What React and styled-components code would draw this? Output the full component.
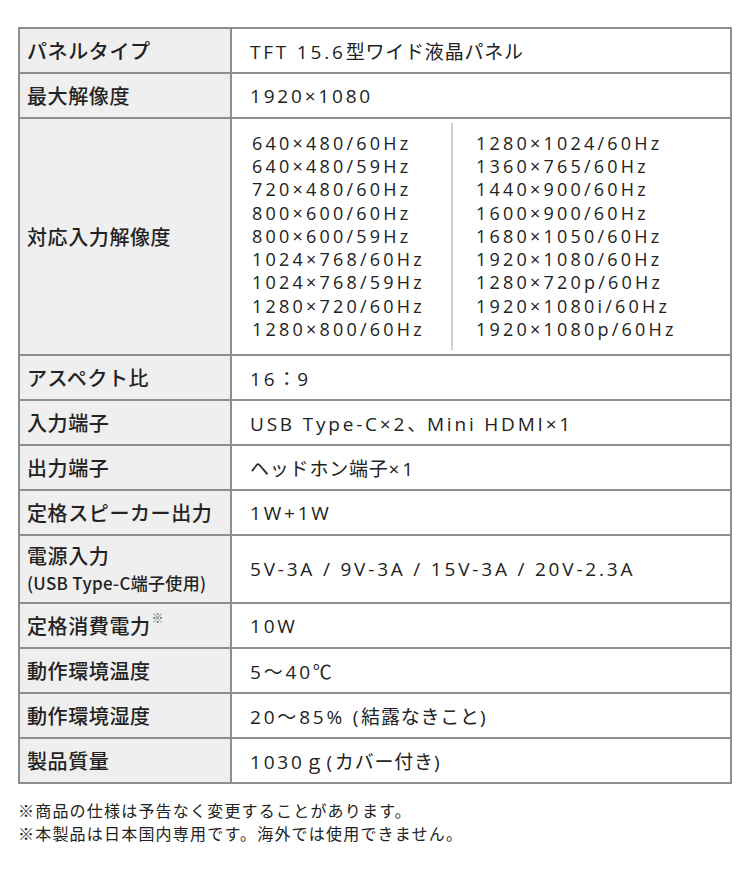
import React from 'react';
import styled, { createGlobalStyle } from 'styled-components';

const GlobalStyle = createGlobalStyle`
  html, body {
    margin: 0;
    padding: 0;
    background: #ffffff;
  }
  body {
    font-family: "Noto Sans CJK JP", sans-serif;
    color: #222222;
  }
`;

const Page = styled.div`
  width: 750px;
  height: 880px;
  box-sizing: border-box;
  padding: 27px 18px 0 18px;
`;

const SpecTable = styled.table`
  width: 714px;
  border-collapse: collapse;
  border: 2px solid #8e8e8e;
`;

const Label = styled.th`
  width: 203px;
  height: ${p => p.$h || 43}px;
  padding: 0 0 0 7px;
  background: #efefef;
  border: 2px solid #8e8e8e;
  text-align: left;
  vertical-align: middle;
  font-family: "Noto Sans CJK JP", sans-serif;
  font-weight: 500;
  font-size: 20px;
  letter-spacing: 0.6px;
  line-height: 1.3;
  color: #222222;
`;

const Sub = styled.span`
  display: block;
  font-size: 17px;
  letter-spacing: 0.3px;
  line-height: 1.3;
  margin-top: 3px;
`;

const Mark = styled.sup`
  font-size: 12px;
  font-weight: 400;
  color: #555555;
  vertical-align: top;
  position: relative;
  top: -3px;
  margin-left: 1px;
`;

const Value = styled.td`
  padding: 0 0 0 18px;
  border: 2px solid #8e8e8e;
  vertical-align: middle;
  font-family: "Open Sans", "Noto Sans CJK JP", sans-serif;
  font-size: 19px;
  letter-spacing: 0.8px;
  color: #222222;
  white-space: nowrap;
`;

/* latin runs are set wider than the kana/kanji around them */
const L = styled.span`
  letter-spacing: 2.8px;
`;

const ResGrid = styled.div`
  display: flex;
  padding: 3px 0;
`;

const ResCol = styled.div`
  display: flex;
  flex-direction: column;
  width: ${p => (p.$right ? 'auto' : '201px')};
  padding: 9px 0 9px ${p => (p.$right ? '23px' : '2px')};
  border-left: ${p => (p.$right ? '2px solid #cfcfcf' : 'none')};
  box-sizing: border-box;
`;

const ResLine = styled.span`
  font-size: 18px;
  line-height: 23.3px;
  letter-spacing: 3.2px;
`;

const Notes = styled.div`
  margin-top: 15px;
  font-family: "Noto Sans CJK JP", sans-serif;
  font-size: 16px;
  line-height: 23px;
  letter-spacing: 1.2px;
  color: #222222;
`;

const leftRes = [
  '640×480/60Hz',
  '640×480/59Hz',
  '720×480/60Hz',
  '800×600/60Hz',
  '800×600/59Hz',
  '1024×768/60Hz',
  '1024×768/59Hz',
  '1280×720/60Hz',
  '1280×800/60Hz',
];

const rightRes = [
  '1280×1024/60Hz',
  '1360×765/60Hz',
  '1440×900/60Hz',
  '1600×900/60Hz',
  '1680×1050/60Hz',
  '1920×1080/60Hz',
  '1280×720p/60Hz',
  '1920×1080i/60Hz',
  '1920×1080p/60Hz',
];

const App = () => (
  <>
    <GlobalStyle />
    <Page>
      <SpecTable>
        <tbody>
          <tr>
            <Label>パネルタイプ</Label>
            <Value><L>TFT 15.6</L>型ワイド液晶パネル</Value>
          </tr>
          <tr>
            <Label>最大解像度</Label>
            <Value><L>1920×1080</L></Value>
          </tr>
          <tr>
            <Label $h={235}>対応入力解像度</Label>
            <Value>
              <ResGrid>
                <ResCol>
                  {leftRes.map(r => <ResLine key={r}>{r}</ResLine>)}
                </ResCol>
                <ResCol $right>
                  {rightRes.map(r => <ResLine key={r}>{r}</ResLine>)}
                </ResCol>
              </ResGrid>
            </Value>
          </tr>
          <tr>
            <Label>アスペクト比</Label>
            <Value><L>16</L>：<L>9</L></Value>
          </tr>
          <tr>
            <Label>入力端子</Label>
            <Value><L>USB Type-C×2</L>、<L>Mini HDMI×1</L></Value>
          </tr>
          <tr>
            <Label>出力端子</Label>
            <Value>ヘッドホン端子<L>×1</L></Value>
          </tr>
          <tr>
            <Label>定格スピーカー出力</Label>
            <Value><L>1W+1W</L></Value>
          </tr>
          <tr>
            <Label $h={66}>
              電源入力
              <Sub>(USB Type-C端子使用)</Sub>
            </Label>
            <Value><L>5V-3A / 9V-3A / 15V-3A / 20V-2.3A</L></Value>
          </tr>
          <tr>
            <Label>
              定格消費電力<Mark>※</Mark>
            </Label>
            <Value><L>10W</L></Value>
          </tr>
          <tr>
            <Label>動作環境温度</Label>
            <Value><L>5〜40℃</L></Value>
          </tr>
          <tr>
            <Label>動作環境湿度</Label>
            <Value><L>20〜85% (</L>結露なきこと<L>)</L></Value>
          </tr>
          <tr>
            <Label>製品質量</Label>
            <Value><L>1030ｇ(</L>カバー付き<L>)</L></Value>
          </tr>
        </tbody>
      </SpecTable>
      <Notes>
        <div>※商品の仕様は予告なく変更することがあります。</div>
        <div>※本製品は日本国内専用です。海外では使用できません。</div>
      </Notes>
    </Page>
  </>
);

export default App;
